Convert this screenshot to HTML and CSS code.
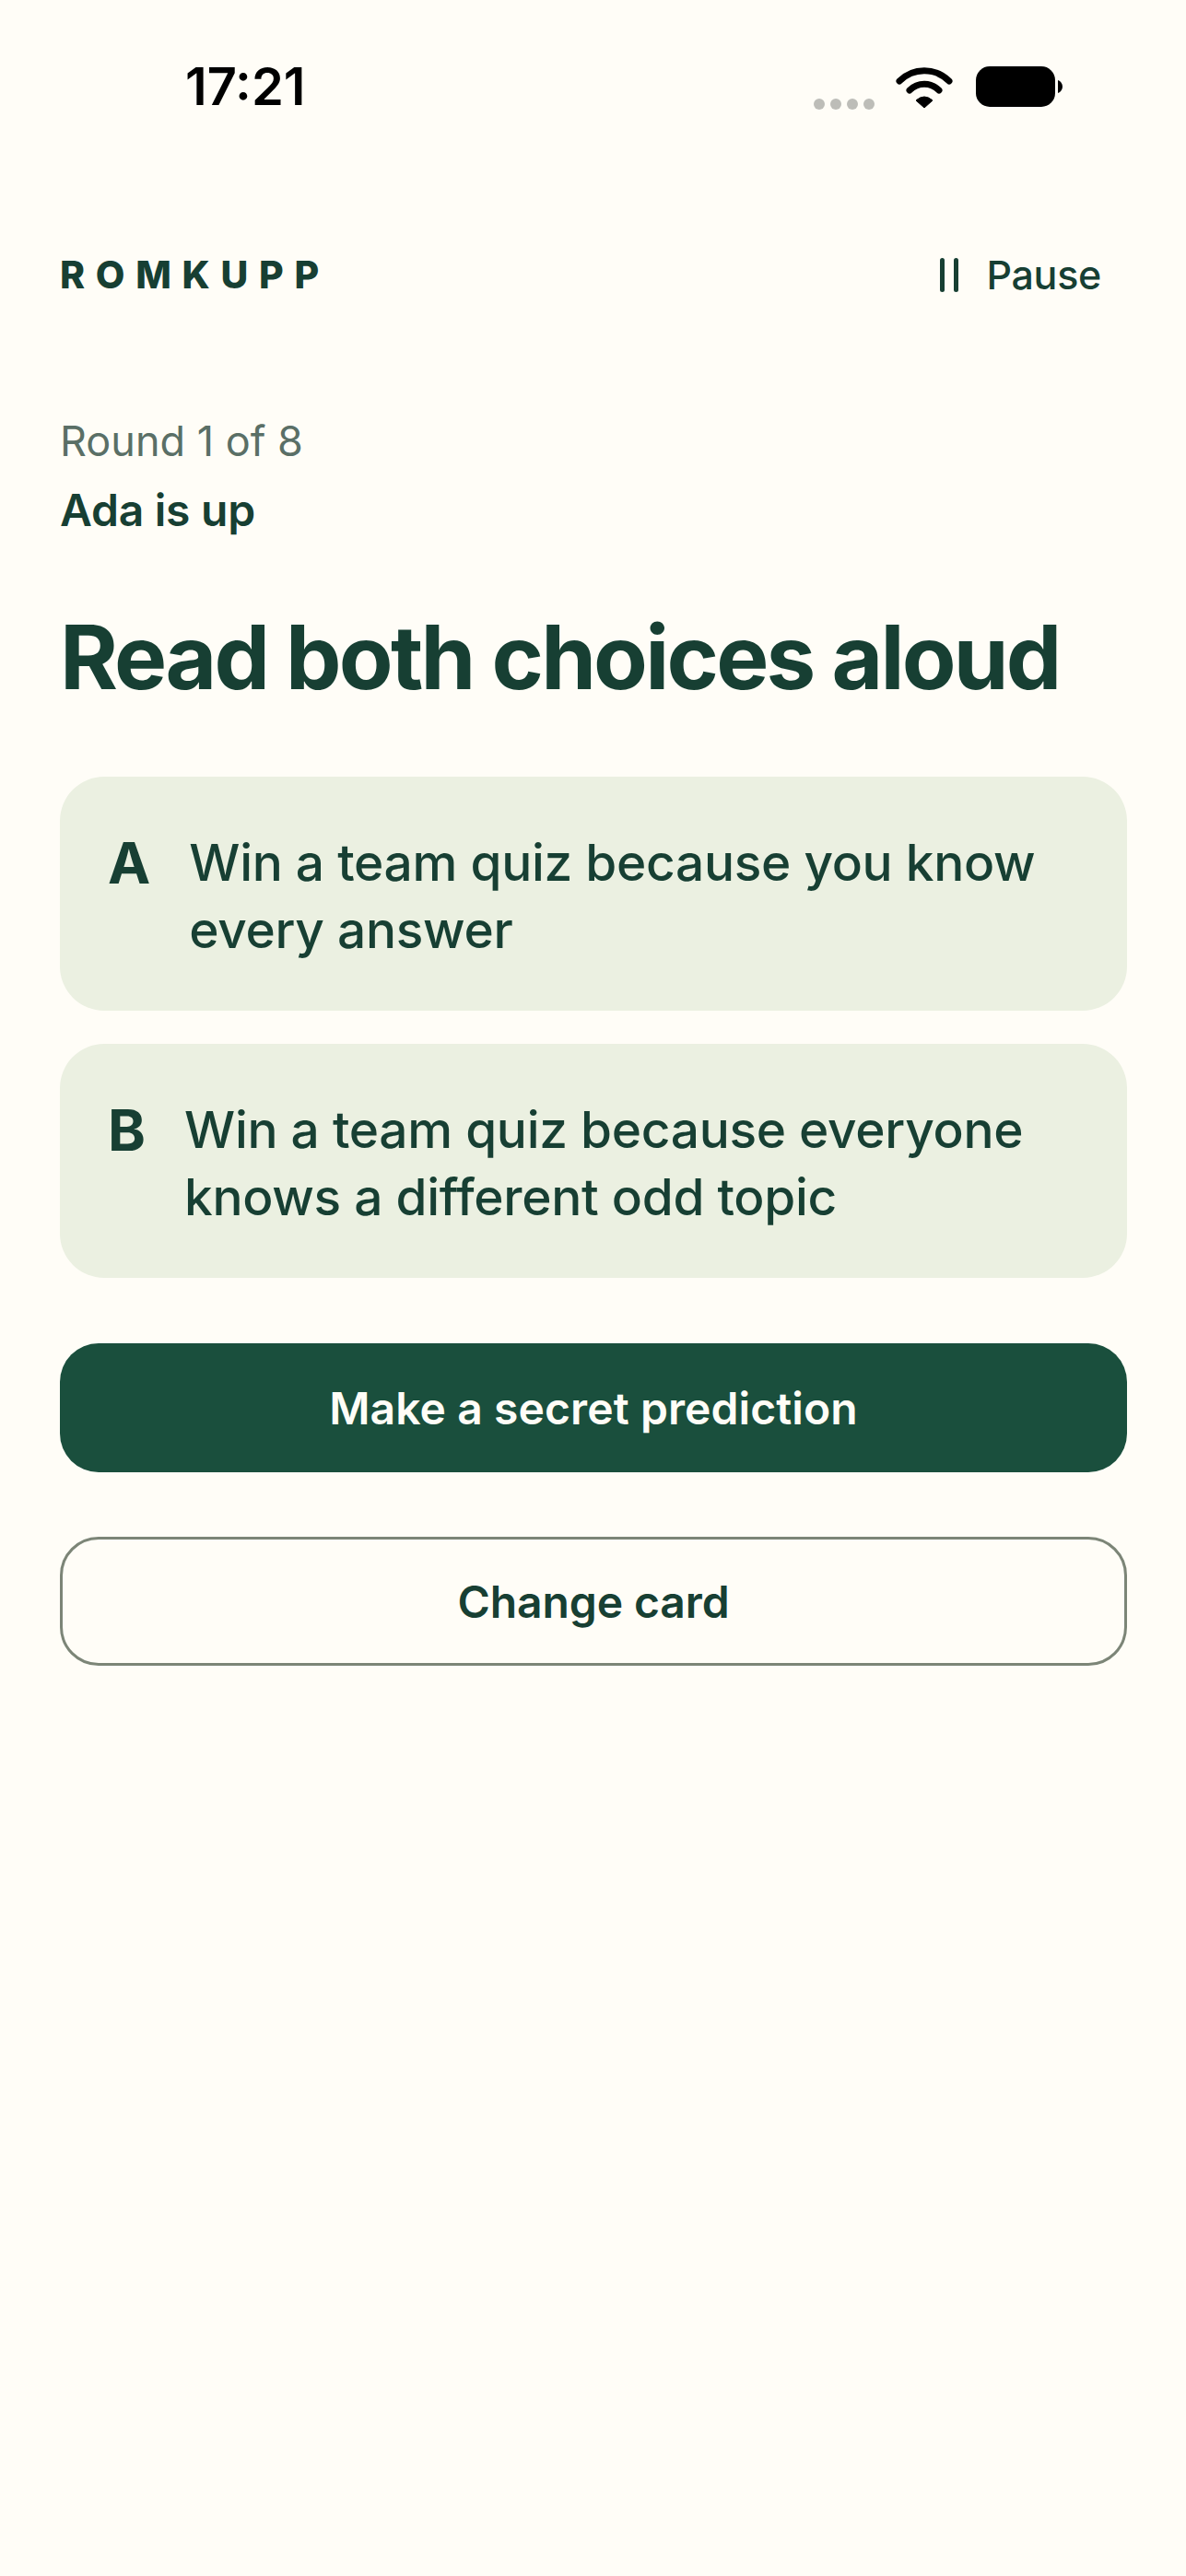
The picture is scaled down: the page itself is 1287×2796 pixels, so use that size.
FILE: index.html
```html
<!DOCTYPE html>
<html lang="en">
<head>
    <meta charset="UTF-8">
    <meta name="viewport" content="width=device-width, initial-scale=1.0">
    <title>Romkupp</title>
    <link rel="stylesheet" href="styles.css">
</head>
<body>
    <div class="status-bar">
        <span class="clock">17:21</span>
        <div class="status-icons">
            <div class="signal"><i></i><i></i><i></i><i></i></div>
            <svg class="wifi" width="62" height="46" viewBox="0 0 62 46">
                <path d="M4 16 C19 1 43 1 58 16" fill="none" stroke="#000" stroke-width="7" stroke-linecap="round"/>
                <path d="M15 26 C24 17 38 17 47 26" fill="none" stroke="#000" stroke-width="7" stroke-linecap="round"/>
                <path d="M31 45 L22 37 Q31 29 40 37 Z" fill="#000" stroke="#000" stroke-width="1" stroke-linejoin="round"/>
            </svg>
            <svg class="battery" width="95" height="44" viewBox="0 0 95 44">
                <rect x="0" y="0" width="86" height="44" rx="15" fill="#000"/>
                <path d="M89 15 C92 16 94 19 94 22 C94 25 92 28 89 29 Z" fill="#000"/>
            </svg>
        </div>
    </div>

    <div class="container">
        <header class="top-row">
            <div class="brand">ROMKUPP</div>
            <div class="pause">
                <span class="pause-icon"><i></i><i></i></span>
                <span>Pause</span>
            </div>
        </header>

        <p class="round">Round 1 of 8</p>
        <p class="player">Ada is up</p>

        <h1>Read both choices aloud</h1>

        <div class="choice">
            <span class="letter">A</span>
            <p>Win a team quiz because you know every answer</p>
        </div>
        <div class="choice">
            <span class="letter">B</span>
            <p>Win a team quiz because everyone knows a different odd topic</p>
        </div>

        <button class="btn btn-primary">Make a secret prediction</button>
        <button class="btn btn-secondary">Change card</button>
    </div>
</body>
</html>
```

FILE: styles.css
```css
body {
    font-family: 'Inter', sans-serif;
    background: #fffdf7;
    color: #173f33;
    margin: 0;
    min-height: 2796px;
}

/* Status bar */
.status-bar {
    display: flex;
    justify-content: space-between;
    align-items: flex-start;
    height: 270px;
    padding: 66px 133px 0 201px;
    box-sizing: border-box;
}

.clock {
    font-size: 56px;
    line-height: 56px;
    font-weight: 600;
    color: #000;
}

.status-icons {
    display: flex;
    align-items: flex-start;
    gap: 23px;
    padding-top: 6px;
}

.signal {
    display: flex;
    gap: 6px;
    margin-top: 35px;
}

.signal i {
    width: 12px;
    height: 12px;
    border-radius: 50%;
    background: #bdbdb8;
}

.wifi {
    margin-right: 2px;
}

/* Main column */
.container {
    padding: 0 64px 0 65px;
}

.top-row {
    display: flex;
    justify-content: space-between;
    align-items: center;
    height: 56px;
    padding-right: 28px;
}

.brand {
    font-size: 41px;
    font-weight: 800;
    letter-spacing: 0.285em;
}

.pause {
    display: flex;
    align-items: center;
    gap: 30px;
    font-size: 43px;
    font-weight: 500;
    letter-spacing: -0.3px;
}

.pause-icon {
    display: flex;
    gap: 10px;
}

.pause-icon i {
    width: 5px;
    height: 37px;
    background: #173f33;
    border-radius: 3px;
}

.round {
    margin: 121px 0 0;
    font-size: 45px;
    line-height: 64px;
    color: #5a6f66;
}

.player {
    margin: 11px 0 0;
    font-size: 48px;
    line-height: 64px;
    font-weight: 600;
    letter-spacing: -0.25px;
}

h1 {
    margin: 69px 0 0;
    font-size: 96px;
    line-height: 116px;
    font-weight: 700;
    letter-spacing: -0.029em;
}

.choice {
    display: flex;
    gap: 42px;
    margin-top: 36px;
    padding: 60px 50px 38px 52px;
    background: #ebf0e1;
    border-radius: 48px;
    height: 254px;
    box-sizing: border-box;
}

h1 + .choice {
    margin-top: 72px;
}

.letter {
    font-size: 62px;
    line-height: 73px;
    font-weight: 700;
    margin-top: -3px;
}

.choice p {
    margin: -3px 0 0;
    font-size: 55px;
    line-height: 73px;
    font-weight: 500;
    letter-spacing: -0.3px;
}

.btn {
    display: block;
    width: 100%;
    height: 140px;
    font-family: inherit;
    font-size: 48px;
    font-weight: 600;
    letter-spacing: -0.1px;
    border-radius: 42px;
    cursor: pointer;
}

.btn-primary {
    margin-top: 71px;
    background: #1a4f3d;
    color: #fffdf7;
    border: none;
    letter-spacing: 0.1px;
}

.btn-secondary {
    margin-top: 70px;
    background: transparent;
    color: #173f33;
    border: 3px solid #7c8577;
}
```
